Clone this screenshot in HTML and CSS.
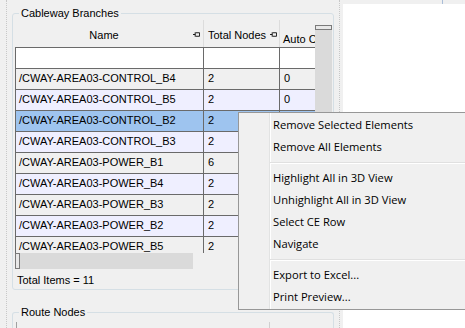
FILE: index.html
```html
<!DOCTYPE html>
<html lang="en">
<head>
  <meta charset="UTF-8">
  <title>Cableway Branches</title>
  <link rel="stylesheet" href="styles.css">
</head>
<body>
  <div class="app">
    <div class="edge"></div>

    <div class="left">
      <fieldset class="group">
        <legend>Cableway Branches</legend>
        <div class="grid">
          <div class="viewport">
            <div class="head">
              <div class="hcell"><span class="htext">Name</span><span class="pin"><svg width="8" height="7" viewBox="0 0 8 7"><path d="M0 3.5H2.5M2.5 1V6M3 1.5H7.5V5.5H3" fill="none" stroke="#000" stroke-width="1"/></svg></span></div>
              <div class="hcell"><span class="htext">Total Nodes</span><span class="pin"><svg width="8" height="7" viewBox="0 0 8 7"><path d="M0 3.5H2.5M2.5 1V6M3 1.5H7.5V5.5H3" fill="none" stroke="#000" stroke-width="1"/></svg></span></div>
              <div class="hcell last"><span class="htext left">Auto Connected</span></div>
            </div>
            <div class="row filter"><div class="cell"></div><div class="cell"></div><div class="cell"></div></div>
            <div class="row"><div class="cell">/CWAY-AREA03-CONTROL_B4</div><div class="cell">2</div><div class="cell">0</div></div>
            <div class="row alt"><div class="cell">/CWAY-AREA03-CONTROL_B5</div><div class="cell">2</div><div class="cell">0</div></div>
            <div class="row selected"><div class="cell">/CWAY-AREA03-CONTROL_B2</div><div class="cell">2</div><div class="cell">0</div></div>
            <div class="row alt"><div class="cell">/CWAY-AREA03-CONTROL_B3</div><div class="cell">2</div><div class="cell">0</div></div>
            <div class="row"><div class="cell">/CWAY-AREA03-POWER_B1</div><div class="cell">6</div><div class="cell">0</div></div>
            <div class="row alt"><div class="cell">/CWAY-AREA03-POWER_B4</div><div class="cell">2</div><div class="cell">0</div></div>
            <div class="row"><div class="cell">/CWAY-AREA03-POWER_B3</div><div class="cell">2</div><div class="cell">0</div></div>
            <div class="row alt"><div class="cell">/CWAY-AREA03-POWER_B2</div><div class="cell">2</div><div class="cell">0</div></div>
            <div class="row"><div class="cell">/CWAY-AREA03-POWER_B5</div><div class="cell">2</div><div class="cell">0</div></div>
          </div>
          <div class="vscroll"><div class="vthumb"></div></div>
          <div class="hscroll"><div class="hthumb"></div></div>
        </div>
        <div class="total">Total Items = 11</div>
      </fieldset>

      <fieldset class="group second">
        <legend>Route Nodes</legend>
        <div class="rn-head"><div class="rn-col"></div></div>
      </fieldset>
    </div>

    <div class="splitter"></div>

    <div class="right">
      <div class="tabstrip"><div class="tabedge"></div></div>
      <div class="view"></div>
    </div>
  </div>

  <!-- context menu -->
  <div class="menu">
    <div class="item">Remove Selected Elements</div>
    <div class="item">Remove All Elements</div>
    <div class="sep"></div>
    <div class="item">Highlight All in 3D View</div>
    <div class="item">Unhighlight All in 3D View</div>
    <div class="item">Select CE Row</div>
    <div class="item">Navigate</div>
    <div class="sep"></div>
    <div class="item">Export to Excel...</div>
    <div class="item">Print Preview...</div>
  </div>
</body>
</html>
```

FILE: styles.css
```css
* { box-sizing: border-box; }
body { margin: 0; width: 465px; height: 328px; overflow: hidden; position: relative; background: #f0f0f0; font-family: "Liberation Sans", Arial, sans-serif; font-size: 11px; color: #000; }
.app { display: flex; height: 328px; overflow: hidden; }

/* side strips */
.edge { width: 12px; flex: none; padding-left: 6px; }
.edge::before { content: ""; display: block; height: 100%; border-left: 1px dotted #c8c8c8; }
.splitter { width: 9px; flex: none; padding-left: 5px; }
.splitter::before { content: ""; display: block; height: 100%; border-left: 1px dotted #c8c8c8; }
.right { flex: 1; display: flex; flex-direction: column; }
.tabstrip { height: 4px; flex: none; }
.tabedge { width: 100px; height: 4px; border-right: 1px solid #a9bdd8; }
.view { flex: 1; background: #fff; }

/* group boxes */
.left { width: 322px; flex: none; padding-top: 7px; overflow: hidden; }
.group { margin: 0; padding: 0; min-width: 0; border: 1px solid #d5dfe5; border-radius: 3px; }
.group legend { margin-left: 6px; padding: 0 2px; line-height: 13px; }
.group.second { margin-top: 16px; height: 22px; border-bottom: 0; border-radius: 3px 3px 0 0; }

/* grid */
.grid { display: grid; grid-template-columns: 300px 17px; grid-template-rows: 233px 17px; margin: 0 1px 0 2px; }
.viewport { overflow: hidden; }
.head { display: flex; height: 28px; border-bottom: 1px solid #6a6a6a; }
.hcell { display: flex; align-items: center; padding-top: 3px; border-right: 1px solid #dcdcdc; white-space: nowrap; overflow: hidden; }
.hcell:nth-child(1) { width: 189px; padding-right: 3px; }
.hcell:nth-child(2) { width: 76px; padding-right: 2px; }
.hcell.last { width: 35px; border-right: 0; }
.htext { flex: 1; text-align: center; }
.htext.left { text-align: left; padding-left: 3px; }
.pin { display: flex; width: 7px; overflow: hidden; margin-top: -1px; }

.row { display: flex; height: 21px; background: #f0f0f0; }
.row.alt { background: #efefff; }
.row.filter { background: #fff; }
.row.selected { background: #9ec4ef; }
.cell { height: 21px; padding: 3px 0 0 4px; border-right: 1px solid #6a6a6a; border-bottom: 1px solid #6a6a6a; white-space: nowrap; overflow: hidden; }
.cell:nth-child(1) { width: 189px; border-left: 1px solid #6a6a6a; padding-left: 3px; }
.cell:nth-child(2) { width: 76px; }
.cell:nth-child(3) { width: 35px; border-right: 0; }

.vscroll { margin-top: 5px; background: #dadada; }
.vthumb { height: 5px; border: 1px solid #7a7a7a; background: #e8e8e8; }
.hscroll { width: 178px; height: 16px; background: #dadada; }
.hthumb { width: 5px; height: 16px; border: 1px solid #7a7a7a; background: #e8e8e8; }
.total { height: 19px; padding: 4px 0 0 4px; }

.rn-head { margin: 3px 0 0 3px; height: 10px; border-left: 1px solid #a0a0a0; padding-left: 252px; }
.rn-col { height: 100%; border-left: 1px solid #d0d0d0; }

/* context menu */
.menu { position: absolute; left: 238px; top: 112px; width: 240px; padding: 1px 0; border: 1px solid #979797; background: linear-gradient(to right, #f0f0f0 30px, #e2e3e3 30px 31px, #fff 31px 32px, #f0f0f0 32px); font-family: "Open Sans", sans-serif; font-size: 11.2px; color: #000; }
.item { height: 22px; line-height: 22px; padding-left: 34px; white-space: nowrap; }
.sep { height: 9px; margin-left: 31px; padding-top: 4px; }
.sep::before { content: ""; display: block; border-top: 1px solid #e0e0e0; border-bottom: 1px solid #fff; }
```
